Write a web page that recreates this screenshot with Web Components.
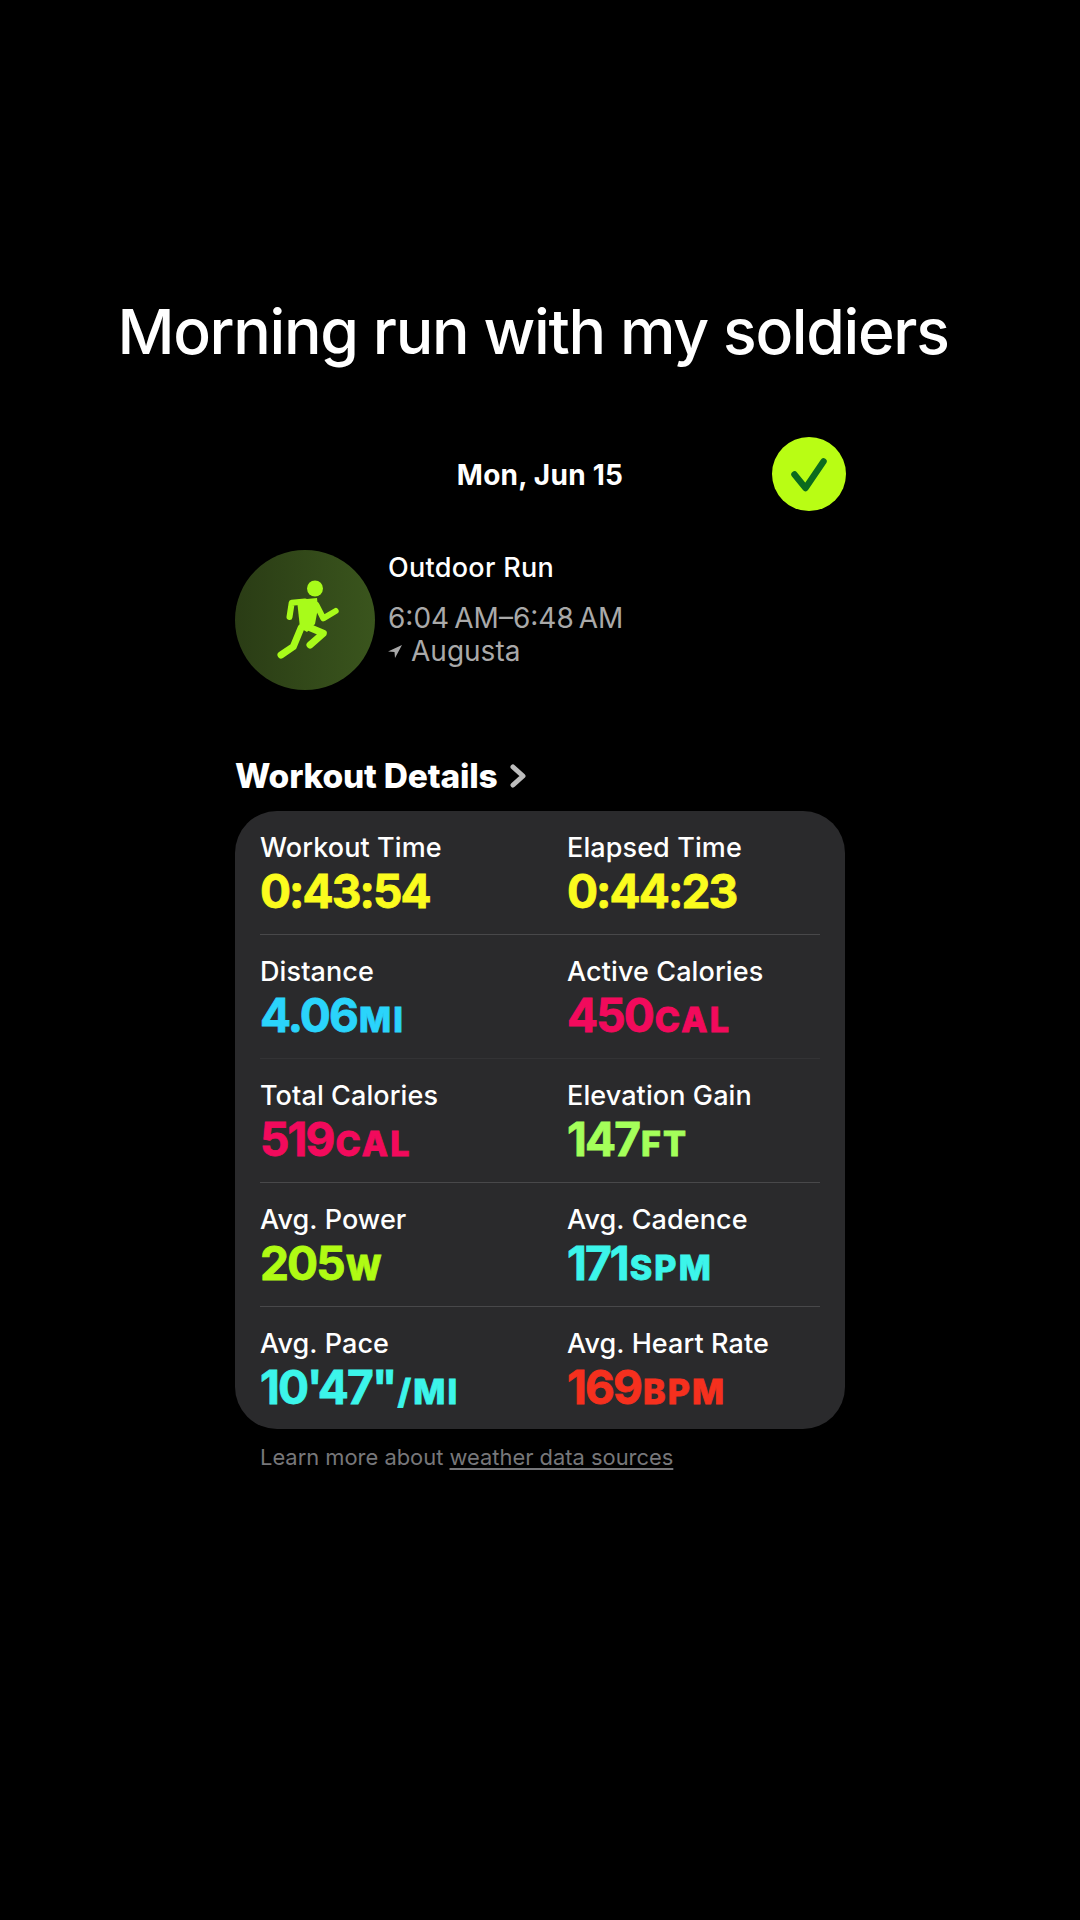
<!DOCTYPE html>
<html>
<head>
<meta charset="utf-8">
<title>Morning run</title>
<style>
html, body { margin: 0; background: #000; }
body { width: 1080px; height: 1920px; overflow: hidden; font-family: Inter, "Liberation Sans", sans-serif; color: #fff; }
</style>
</head>
<body>
<run-page>
    <post-title>Morning run with my soldiers</post-title>
    <day-header>Mon, Jun 15</day-header>
    <workout-summary name="Outdoor Run" time="6:04&#8239;AM–6:48&#8239;AM" place="Augusta"></workout-summary>
    <section-link>Workout Details</section-link>
    <stat-card>
        <stat-row>
            <stat-cell label="Workout Time" value="0:43:54" color="#fbfb1e"></stat-cell>
            <stat-cell label="Elapsed Time" value="0:44:23" color="#fbfb1e"></stat-cell>
        </stat-row>
        <stat-row faint>
            <stat-cell label="Distance" value="4.06" unit="MI" color="#2ad4fb"></stat-cell>
            <stat-cell label="Active Calories" value="450" unit="CAL" color="#f20a5c"></stat-cell>
        </stat-row>
        <stat-row>
            <stat-cell label="Total Calories" value="519" unit="CAL" color="#f20a5c"></stat-cell>
            <stat-cell label="Elevation Gain" value="147" unit="FT" color="#a4ff5a"></stat-cell>
        </stat-row>
        <stat-row>
            <stat-cell label="Avg. Power" value="205" unit="W" color="#b0fb14"></stat-cell>
            <stat-cell label="Avg. Cadence" value="171" unit="SPM" color="#3cf5ea"></stat-cell>
        </stat-row>
        <stat-row>
            <stat-cell label="Avg. Pace" value="10'47&quot;" unit="/MI" color="#3cf5ea"></stat-cell>
            <stat-cell label="Avg. Heart Rate" value="169" unit="BPM" color="#f5301e"></stat-cell>
        </stat-row>
    </stat-card>
    <source-note></source-note>
</run-page>
<script>
const define = (name, css, html) => customElements.define(name, class extends HTMLElement {
    constructor() {
        super();
        this.shadow = this.attachShadow({ mode: 'open' });
    }
    connectedCallback() {
        const attr = n => this.getAttribute(n) || '';
        this.shadow.innerHTML = `<style>${css}</style>${html(attr)}`;
    }
});

define('run-page', `
    :host { display: flex; flex-direction: column; align-items: center; padding-top: 293px; }
`, () => `<slot></slot>`);

define('post-title', `
    :host { display: block; box-sizing: border-box; width: 1080px; padding-right: 14px; text-align: center; font: 550 62.5px/76px Inter, sans-serif; letter-spacing: -1.34px; white-space: nowrap; }
`, () => `<slot></slot>`);

define('day-header', `
    :host { display: grid; grid-template-columns: 1fr auto 1fr; align-items: center; width: 610px; height: 74px; margin-top: 68px; font: 700 28px Inter, sans-serif; letter-spacing: .25px; }
    div { grid-column: 2; padding-top: 2px; }
    svg { grid-column: 3; justify-self: end; display: block; margin-right: -1px; }
`, () => `<div><slot></slot></div>
    <svg width="74" height="74" viewBox="0 0 74 74">
        <circle cx="37" cy="37" r="37" fill="#b9fd14"/>
        <path d="M22.5 37.5 33.5 51 51.5 24.5" fill="none" stroke="#0b6a1e" stroke-width="6.5" stroke-linecap="round" stroke-linejoin="round"/>
    </svg>`);

define('workout-summary', `
    :host { display: flex; gap: 13px; width: 610px; height: 140px; margin-top: 39px; }
    svg.badge { display: block; flex: none; }
    .name { font: 500 27px/32px Inter, sans-serif; color: #fff; margin-top: 2px; letter-spacing: .3px; }
    .time { font: 400 28px/32px Inter, sans-serif; color: #a9a9a9; margin-top: 18px; letter-spacing: 0; white-space: nowrap; }
    .place { display: flex; align-items: center; gap: 9px; font: 400 28px/32px Inter, sans-serif; color: #a9a9a9; margin-top: 1px; }
`, attr => `
    <svg class="badge" width="140" height="140" viewBox="0 0 140 140">
        <defs>
            <linearGradient id="disc" x1="0" y1="0.5" x2="1" y2="0.5">
                <stop offset="0" stop-color="#2a3c15"/>
                <stop offset="1" stop-color="#3a551d"/>
            </linearGradient>
        </defs>
        <circle cx="70" cy="70" r="70" fill="url(#disc)"/>
        <g fill="none" stroke="#a8fb1a" stroke-linecap="round" stroke-linejoin="round">
            <path stroke-width="6" d="M54.5 67 56.7 52.7 70 51.5"/>
            <path stroke-width="6" d="M81.5 55 88.3 68.3 100.7 61"/>
            <path stroke-width="7" d="M71 76 88.3 83.3 75 95"/>
            <path stroke-width="7" d="M66 78 58.3 96.7 46 105"/>
        </g>
        <path d="M62 50 82 48 83 58 80 74 72 82 65 78Z" fill="#a8fb1a"/>
        <circle cx="80" cy="38.5" r="8" fill="#a8fb1a"/>
    </svg>
    <div>
        <div class="name">${attr('name')}</div>
        <div class="time">${attr('time')}</div>
        <div class="place">
            <svg width="14" height="14" viewBox="0 0 14 14"><path d="M14 1 0 7.5 6.5 8 7 14Z" fill="#a9a9a9"/></svg>
            <span>${attr('place')}</span>
        </div>
    </div>`);

define('section-link', `
    :host { display: flex; align-items: center; gap: 11px; width: 610px; height: 40px; margin-top: 66px; font: 800 33.5px/40px Inter, sans-serif; letter-spacing: -.2px; white-space: nowrap; }
    svg { display: block; }
`, () => `<slot></slot>
    <svg width="18" height="24" viewBox="0 0 18 24"><path d="M4 3 14 12 4 21" fill="none" stroke="#bdbdbd" stroke-width="5" stroke-linecap="round" stroke-linejoin="round"/></svg>`);

define('stat-card', `
    :host { display: block; box-sizing: border-box; width: 610px; height: 618px; margin-top: 15px; padding: 0 25px; background: #2a2a2c; border-radius: 42px; }
`, () => `<slot></slot>`);

define('stat-row', `
    :host { display: grid; grid-template-columns: 307px 1fr; height: 124px; box-sizing: border-box; padding-top: 21px; border-bottom: 1px solid #48484a; }
    :host(:last-child) { border-bottom: 0; }
    :host([faint]) { border-bottom-color: #333335; }
`, () => `<slot></slot>`);

define('stat-cell', `
    :host { display: block; }
    .label { font: 500 27px/32px Inter, sans-serif; color: #fff; letter-spacing: .1px; white-space: nowrap; }
    .value { font: 700 46px/50px Inter, sans-serif; letter-spacing: -1.9px; white-space: nowrap; margin-top: 2px; -webkit-text-stroke: .8px currentColor; }
    .unit { font-size: 34px; font-weight: 800; margin-left: 2px; letter-spacing: 2.2px; }
`, attr => `
    <div class="label">${attr('label')}</div>
    <div class="value" style="color:${attr('color')}">${attr('value')}<span class="unit">${attr('unit')}</span></div>`);

define('source-note', `
    :host { display: block; box-sizing: border-box; width: 610px; padding: 14px 25px 0; font: 400 21.9px/28px Inter, sans-serif; color: #77777a; white-space: nowrap; }
    u { text-underline-offset: 3px; }
`, () => `Learn more about <u>weather data sources</u>`);
</script>
</body>
</html>
